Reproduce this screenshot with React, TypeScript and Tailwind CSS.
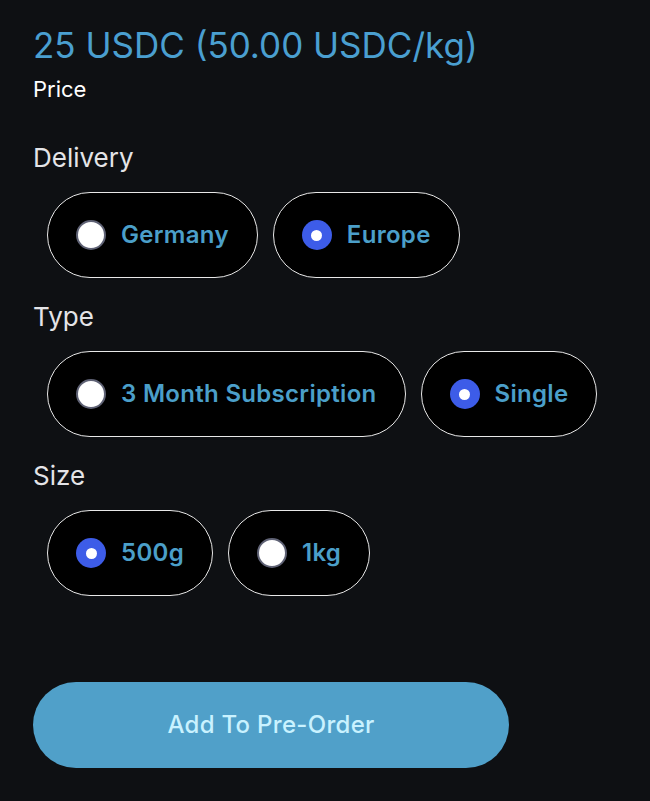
import React, { useState } from 'react';

const Radio: React.FC<{ checked: boolean }> = ({ checked }) =>
  checked ? (
    <span className="flex h-[30px] w-[30px] shrink-0 items-center justify-center rounded-full bg-[#3d5ce8]">
      <span className="h-[11px] w-[11px] rounded-full bg-white" />
    </span>
  ) : (
    <span className="h-[30px] w-[30px] shrink-0 rounded-full border-2 border-[#5f6275] bg-white" />
  );

const OptionGroup: React.FC<{
  title: string;
  options: string[];
  value: string;
  onChange: (v: string) => void;
}> = ({ title, options, value, onChange }) => (
  <div>
    <div className="text-[26px] leading-[30px] text-[#e4e4e7]">{title}</div>
    <div className="mt-[19px] flex gap-[15px] pl-[14px]">
      {options.map((o) => (
        <button
          key={o}
          onClick={() => onChange(o)}
          className="flex h-[86px] items-center gap-[15px] rounded-full border-[1.5px] border-[#e8e8e8] bg-black px-[28px]"
        >
          <Radio checked={value === o} />
          <span className="text-[24px] font-semibold tracking-[0.3px] text-[#4b9fc9]">{o}</span>
        </button>
      ))}
    </div>
  </div>
);

export default function App() {
  const [delivery, setDelivery] = useState('Europe');
  const [type, setType] = useState('Single');
  const [size, setSize] = useState('500g');

  return (
    <div
      className="min-h-screen bg-[#0e1013] px-[33px] pt-[24px]"
      style={{ fontFamily: 'Inter, "Open Sans", sans-serif' }}
    >
      <div className="text-[35px] leading-[42px] text-[#4a9fd0]">25 USDC (50.00 USDC/kg)</div>
      <div className="mt-[9px] text-[22px] leading-[28px] text-white">Price</div>

      <div className="mt-[40px] flex flex-col gap-[24px]">
        <OptionGroup title="Delivery" options={['Germany', 'Europe']} value={delivery} onChange={setDelivery} />
        <OptionGroup
          title="Type"
          options={['3 Month Subscription', 'Single']}
          value={type}
          onChange={setType}
        />
        <OptionGroup title="Size" options={['500g', '1kg']} value={size} onChange={setSize} />
      </div>

      <button className="mt-[86px] flex h-[86px] w-[476px] items-center justify-center rounded-full bg-[#50a0c9] text-[24px] font-medium tracking-[0.3px] text-[#c9f2ff]">
        Add To Pre-Order
      </button>
    </div>
  );
}
